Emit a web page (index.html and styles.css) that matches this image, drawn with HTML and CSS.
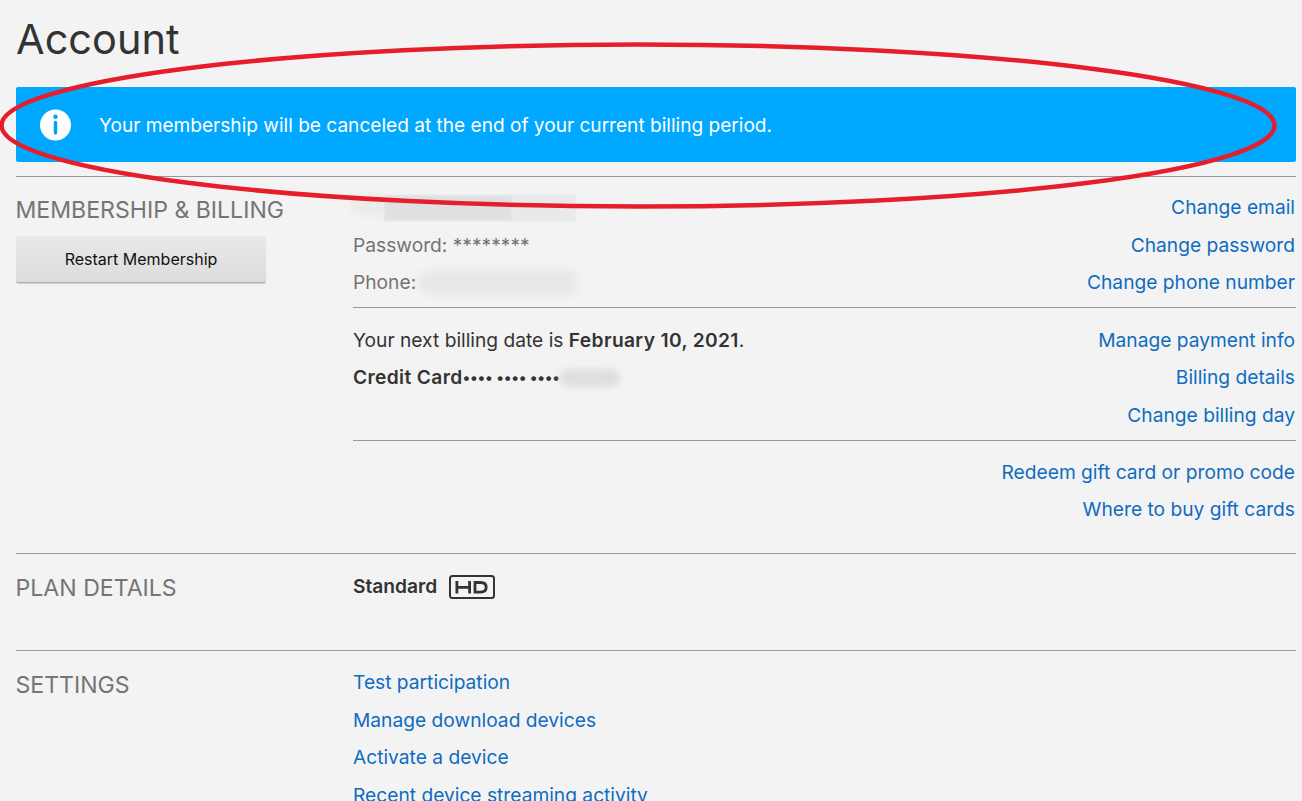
FILE: index.html
```html
<!DOCTYPE html>
<html lang="en">
<head>
<meta charset="utf-8">
<title>Account</title>
<link rel="stylesheet" href="styles.css">
</head>
<body>
<main class="page">
  <h1 class="title">Account</h1>
  <div class="banner">
    <svg class="banner-icon" width="32" height="32" viewBox="0 0 32 32" aria-hidden="true">
      <circle cx="15.500" cy="16" r="15.500" fill="#fff"/>
      <circle cx="15.500" cy="7.800" r="2.200" fill="#00a2f5"/>
      <path d="M15.500 13.500v10.500" fill="none" stroke="#00a2f5" stroke-width="3.400" stroke-linecap="round"/>
    </svg>
    <span class="banner-text">Your membership will be canceled at the end of your current billing period.</span>
  </div>

  <section class="section membership">
    <div class="side">
      <h2 class="heading">MEMBERSHIP &amp; BILLING</h2>
      <button class="restart" type="button">Restart Membership</button>
    </div>
    <div class="body">
      <div class="group first">
        <div class="rows">
          <div class="row muted">
            <span class="smudge-email">
              <span class="smudge smudge-a"></span>
              <span class="smudge smudge-b"></span>
              <span class="smudge smudge-c"></span>
            </span>
          </div>
          <div class="row muted"><span>Password: ********</span></div>
          <div class="row muted"><span>Phone:</span><span class="smudge smudge-phone"></span></div>
        </div>
        <div class="links">
          <a href="#">Change email</a>
          <a href="#">Change password</a>
          <a href="#">Change phone number</a>
        </div>
      </div>
      <div class="group second">
        <div class="rows">
          <div class="row"><span>Your next billing date is <b class="wide">February 10, 2021</b>.</span></div>
          <div class="row"><b class="wide">Credit Card</b><b class="dots">•••• •••• ••••</b><span class="smudge smudge-card"></span></div>
        </div>
        <div class="links">
          <a href="#">Manage payment info</a>
          <a href="#">Billing details</a>
          <a href="#">Change billing day</a>
        </div>
      </div>
      <div class="group last">
        <div class="rows"></div>
        <div class="links">
          <a href="#">Redeem gift card or promo code</a>
          <a href="#">Where to buy gift cards</a>
        </div>
      </div>
    </div>
  </section>

  <section class="section plan">
    <div class="side"><h2 class="heading">PLAN DETAILS</h2></div>
    <div class="body plan-body">
      <b>Standard</b>
      <svg class="hd" width="46" height="24" viewBox="0 0 46 24" aria-hidden="true">
        <rect x="1" y="1" width="44" height="22" rx="2.500" fill="none" stroke="#333" stroke-width="2"/>
        <path d="M7.900 6v12.500M20.600 6v12.500M7.900 12.300h12.700" fill="none" stroke="#333" stroke-width="2.800"/>
        <path d="M26 7.500h5.500c3.400 0 5.700 1.800 5.700 4.800s-2.300 4.800-5.700 4.800H26z" fill="none" stroke="#333" stroke-width="2.800"/>
      </svg>
    </div>
  </section>

  <section class="section settings">
    <div class="side"><h2 class="heading">SETTINGS</h2></div>
    <div class="body setting-links">
      <a href="#">Test participation</a>
      <a href="#">Manage download devices</a>
      <a href="#">Activate a device</a>
      <a href="#">Recent device streaming activity</a>
    </div>
  </section>
</main>
<svg class="annotation" width="1302" height="801" viewBox="0 0 1302 801" aria-hidden="true">
  <ellipse cx="638" cy="125.500" rx="636.500" ry="81" fill="none" stroke="#e61e2b" stroke-width="4.500"/>
</svg>
</body>
</html>
```
FILE: styles.css
```css
html, body {
  margin: 0;
  height: 100%;
  overflow: hidden;
  background: #f3f3f3;
}
body {
  font-family: Inter, "Liberation Sans", sans-serif;
  font-size: 19.200px;
  color: #333;
}
.page {
  padding: 0 6px 0 16px;
}
.title {
  margin: 0;
  padding-top: 14px;
  height: 87px;
  box-sizing: border-box;
  font-size: 41.500px;
  line-height: 50px;
  font-weight: 400;
  color: #333;
}
.banner {
  display: flex;
  align-items: center;
  gap: 27px;
  height: 75px;
  margin-bottom: 14px;
  padding-left: 24px;
  background: #00a8ff;
  border-radius: 2px;
  color: #fff;
  font-size: 19.080px;
}
.banner-text {
  padding-top: 1px;
}
.banner-icon {
  flex: none;
}
.section {
  display: grid;
  grid-template-columns: 337px 1fr;
  box-sizing: border-box;
  border-top: 1px solid #999;
}
.membership { height: 377px; }
.plan { height: 97px; }
.heading {
  margin: 0 0 0 -.5px;
  padding-top: 21px;
  font-size: 23.100px;
  line-height: 26px;
  font-weight: 400;
  color: #757575;
}
.membership .heading {
  padding-top: 20px;
}
.restart {
  display: block;
  width: 250px;
  height: 47px;
  margin: 13px 0 0;
  padding: 0;
  border: 0;
  border-bottom: 1px solid #b0b0b0;
  border-radius: 2px;
  background: linear-gradient(#e9e9e9, #dcdcdc);
  box-shadow: 0 1px 1px rgba(0, 0, 0, .15);
  font: 16px Inter, "Liberation Sans", sans-serif;
  color: #111;
}
.group {
  display: flex;
  justify-content: space-between;
  border-bottom: 1px solid #999;
}
.first {
  padding: 12px 0 5px;
}
.second {
  padding: 14px 0 5.500px;
}
.group.last {
  border-bottom: 0;
  padding-top: 13.400px;
}
.rows, .links, .setting-links {
  display: flex;
  flex-direction: column;
}
.links {
  align-items: flex-end;
  padding-right: 1px;
}
.row, .links a, .setting-links a {
  height: 37.500px;
  line-height: 37.500px;
  white-space: nowrap;
}
.row {
  display: flex;
  align-items: center;
  gap: 5px;
}
b {
  font-weight: 600;
}
.wide {
  letter-spacing: .36px;
}
.muted {
  color: #737373;
}
a {
  color: #0f6cc0;
  text-decoration: none;
}
.dots {
  margin-left: -5px;
  font-size: 15.500px;
  letter-spacing: -.3px;
}
.smudge {
  display: block;
  background: #e4e4e4;
  filter: blur(3px);
}
.smudge-email {
  display: flex;
  margin-left: -3px;
}
.smudge-a {
  width: 34px;
  height: 20px;
  border-radius: 10px 0 0 10px;
  background: #ebebeb;
}
.smudge-b {
  width: 128px;
  height: 26px;
  background: #e0e0e0;
  filter: blur(1px);
}
.smudge-c {
  width: 64px;
  height: 26px;
  background: #e9e9e9;
  filter: blur(1px);
}
.smudge-phone {
  width: 158px;
  height: 25px;
  margin-left: -2px;
  border-radius: 10px 0 0 10px;
  background: #e8e8e8;
}
.smudge-card {
  width: 60px;
  height: 18px;
  margin-left: -5px;
  border-radius: 9px;
  background: #dedede;
}
.plan-body {
  display: flex;
  align-items: flex-start;
  gap: 12px;
  padding-top: 21px;
}
.plan-body b {
  line-height: 22px;
}
.hd {
  flex: none;
}
.setting-links {
  padding-top: 13px;
  align-items: flex-start;
}
.annotation {
  position: absolute;
  top: 0;
  left: 0;
  pointer-events: none;
}
```
